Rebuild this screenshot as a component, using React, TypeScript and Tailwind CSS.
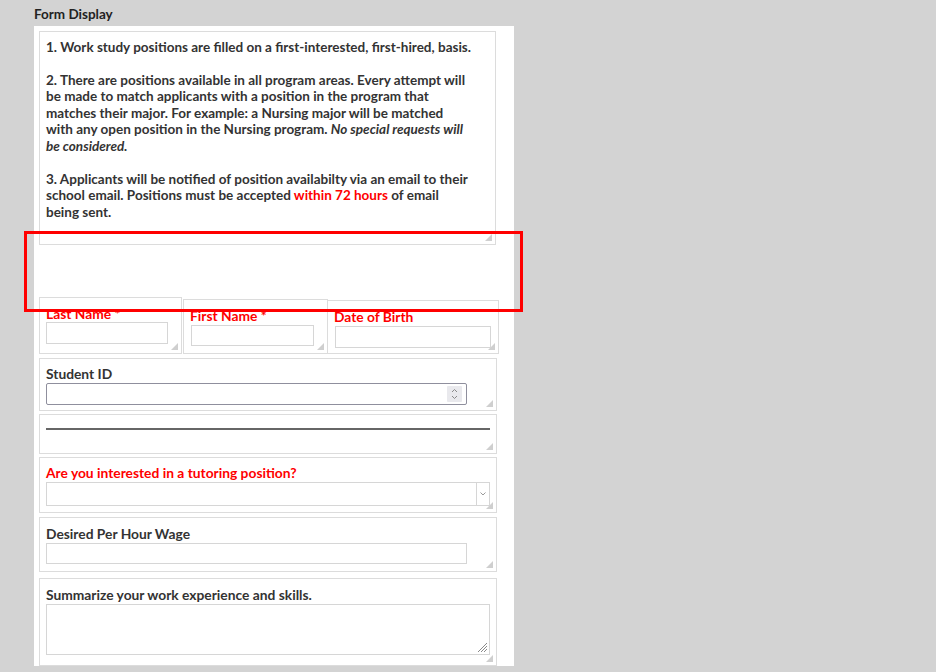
import React from "react";

const font = { fontFamily: "Lato, 'Open Sans', sans-serif" };

function Grip() {
  // little grey resize corner in the bottom right of each field box
  return (
    <svg className="absolute right-[3px] bottom-[3px]" width="7" height="7" viewBox="0 0 7 7">
      <polygon points="7,0 7,7 0,7" fill="#cfcfcf" />
    </svg>
  );
}

function Box({ className = "", children }: { className?: string; children: React.ReactNode }) {
  return (
    <div className={`relative border border-[#dcdcdc] bg-white px-[6px] ${className}`}>
      {children}
      <Grip />
    </div>
  );
}

function Label({ red, children }: { red?: boolean; children: React.ReactNode }) {
  return (
    <div className={`h-[16px] text-[13.8px] leading-[16px] font-bold whitespace-nowrap ${red ? "text-[#ff0000]" : "text-[#333333]"}`}>
      {children}
    </div>
  );
}

export default function App() {
  return (
    <div className="relative h-[672px] w-full overflow-hidden bg-[#d3d3d3] text-[#333333]" style={font}>
      <div className="pl-[34px] pt-[6px] h-[26px] text-[13.5px] leading-[16px] font-bold text-[#222222]">Form Display</div>

      <div className="ml-[34px] w-[480px] h-[640px] bg-white pl-[5px] pt-[5px]">
        {/* instructions box */}
        <div className="relative w-[457px] h-[214px] border border-[#dcdcdc] px-[6px] pt-[7px] text-[13.5px] leading-[16.5px] font-bold text-[#333333] whitespace-nowrap">
          <p>1. Work study positions are filled on a first-interested, first-hired, basis.</p>
          <p className="mt-[16px]">
            2. There are positions available in all program areas. Every attempt will
            <br />
            be made to match applicants with a position in the program that
            <br />
            matches their major. For example: a Nursing major will be matched
            <br />
            with any open position in the Nursing program. <i>No special requests will</i>
            <br />
            <i>be considered.</i>
          </p>
          <p className="mt-[16.5px]">
            3. Applicants will be notified of position availabilty via an email to their
            <br />
            school email. Positions must be accepted <span className="text-[#ff0000]">within 72 hours</span> of email
            <br />
            being sent.
          </p>
          <Grip />
        </div>

        {/* name row */}
        <div className="mt-[52px] flex items-end h-[57px] w-[460px]">
          <Box className="w-[143px] h-[57px] pt-[8px]">
            <Label red>Last Name *</Label>
            <div className="w-[122px] h-[22px] border border-[#d6d6d6]" />
          </Box>
          <Box className="ml-[1px] w-[145px] h-[55px] pt-[8px]">
            <Label red>First Name *</Label>
            <div className="ml-[1px] mt-[1px] w-[123px] h-[21px] border border-[#d6d6d6]" />
          </Box>
          <Box className="-ml-[1px] w-[172px] h-[54px] pt-[8px]">
            <Label red>Date of Birth</Label>
            <div className="ml-[1px] mt-[1px] w-[156px] h-[22px] border border-[#d6d6d6]" />
          </Box>
        </div>

        {/* student id */}
        <Box className="mt-[4px] w-[458px] h-[53px] pt-[7px]">
          <Label>Student ID</Label>
          <div className="mt-[1px] relative w-[421px] h-[22px] rounded-[2px] border border-[#8f8f9d]">
            <div className="absolute right-[4px] top-[2px] w-[15px] h-[16px] bg-[#e9e9ed] rounded-[1px] flex flex-col items-center justify-center">
              <svg width="7" height="12" viewBox="0 0 7 12">
                <polyline points="1,4 3.5,1.5 6,4" fill="none" stroke="#8a8a8a" strokeWidth="1" />
                <polyline points="1,8 3.5,10.5 6,8" fill="none" stroke="#8a8a8a" strokeWidth="1" />
              </svg>
            </div>
          </div>
        </Box>

        {/* separator */}
        <Box className="mt-[3px] w-[458px] h-[40px] pt-[13px]">
          <div className="w-[444px] h-[2px] bg-[#666666]" />
        </Box>

        {/* tutoring */}
        <Box className="mt-[3px] w-[458px] h-[56px] pt-[7px]">
          <Label red>Are you interested in a tutoring position?</Label>
          <div className="mt-[1px] flex w-[444px] h-[24px] border border-[#d6d6d6]">
            <div className="flex-1" />
            <div className="w-[13px] border-l border-[#d6d6d6] flex items-center justify-center">
              <svg width="6" height="4" viewBox="0 0 6 4">
                <polyline points="0.5,0.5 3,3 5.5,0.5" fill="none" stroke="#999999" strokeWidth="1" />
              </svg>
            </div>
          </div>
        </Box>

        {/* wage */}
        <Box className="mt-[4px] w-[458px] h-[55px] pt-[8px]">
          <Label>Desired Per Hour Wage</Label>
          <div className="mt-[1px] w-[421px] h-[21px] border border-[#d6d6d6]" />
        </Box>

        {/* summary */}
        <Box className="mt-[6px] w-[458px] h-[88px] pt-[8px]">
          <Label>Summarize your work experience and skills.</Label>
          <div className="relative mt-[1px] w-[444px] h-[51px] border border-[#d6d6d6]">
            <svg className="absolute right-[1px] bottom-[1px]" width="12" height="12" viewBox="0 0 12 12">
              <line x1="11" y1="2" x2="2" y2="11" stroke="#8a8a8a" strokeWidth="1" />
              <line x1="11" y1="5" x2="5" y2="11" stroke="#8a8a8a" strokeWidth="1" />
              <line x1="11" y1="8" x2="8" y2="11" stroke="#8a8a8a" strokeWidth="1" />
            </svg>
          </div>
        </Box>
      </div>

      {/* red annotation frame laid over the form */}
      <div className="absolute left-[24px] top-[231px] w-[499px] h-[81px] border-[3px] border-[#ff0000] pointer-events-none" />
    </div>
  );
}
